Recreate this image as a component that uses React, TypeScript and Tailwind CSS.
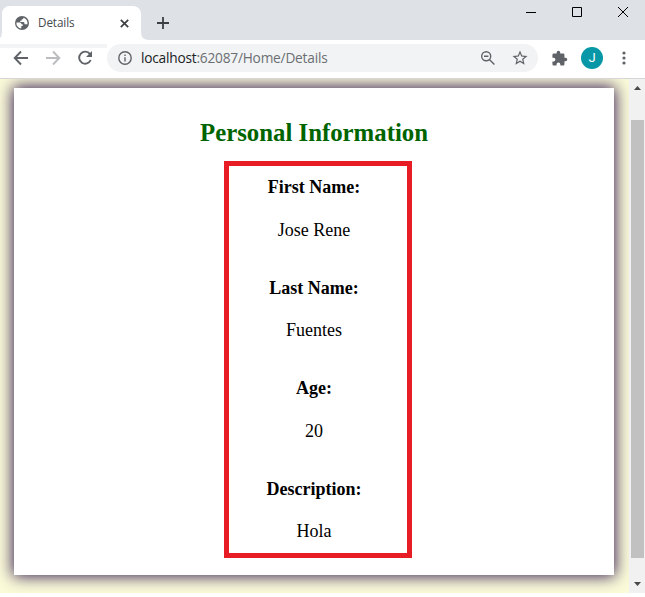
import React from "react";

const fields = [
  { label: "First Name:", value: "Jose Rene" },
  { label: "Last Name:", value: "Fuentes" },
  { label: "Age:", value: "20" },
  { label: "Description:", value: "Hola" },
];

function TabStrip() {
  return (
    <div className="flex h-10 bg-[#dee1e6] pt-[6px]">
      <svg className="-mr-[6px] h-[34px] w-2 shrink-0" viewBox="0 0 8 34">
        <path d="M0 34V32Q2 30 2 26V8Q2 3 8 0V34Z" fill="#fff" />
      </svg>
      <div className="flex h-[34px] w-[139px] shrink-0 items-center rounded-t-lg bg-white">
        <svg className="ml-[13px] h-[14px] w-[14px] shrink-0" viewBox="0 0 14 14">
          <circle cx="7" cy="7" r="7" fill="#5f6368" />
          <path d="M1.4 6.4H4.9Q6.5 6.5 6.5 8.2H7.7V10H6.3V12.5A5.5 5.5 0 0 1 1.4 6.4ZM8.6 1.7Q8.5 3.3 6.6 3.4V4.8H5.2V6H8.5Q9.6 6.2 9.6 8.2H12.4A5.5 5.5 0 0 0 8.6 1.7Z" fill="#fff" />
        </svg>
        <span className="ml-[9px] w-[37px] whitespace-nowrap text-[11.7px] tracking-[-0.1px] text-[#45494d]">Details</span>
        <svg className="ml-[45px] h-[9px] w-[9px]" viewBox="0 0 9 9" fill="none" stroke="#3c4043" strokeWidth="1.7">
          <path d="m.8.8 7.4 7.4M8.2.8.8 8.2" />
        </svg>
      </div>
      <svg className="h-[34px] w-2 shrink-0" viewBox="0 0 8 34">
        <path d="M0 26Q0 34 8 34H0Z" fill="#fff" />
      </svg>
      <svg className="ml-[8px] mt-[11px] h-3 w-3" viewBox="0 0 12 12" stroke="#3c4043" strokeWidth="1.8">
        <path d="M6 0v12M0 6h12" />
      </svg>
      <svg className="ml-auto h-3 w-[103px]" viewBox="0 0 103 12" fill="none" stroke="#000">
        <path d="M0 6.5h10M46.5 1.5h9v9h-9zM92 1l10 10M102 1 92 11" />
      </svg>
      <div className="w-4" />
    </div>
  );
}

function Toolbar() {
  return (
    <div className="flex h-[39px] border-b border-[#d5d6d8] bg-white pt-1">
      <div className="h-7 w-[107px] shrink-0 border-t-4 border-[#f3f4f5]">
        <svg className="h-6 w-[107px]" viewBox="0 48 107 24" fill="none" strokeWidth="1.9">
          <path d="M28 58H15M21 51.5 14.7 58l6.3 6.5" stroke="#5f6368" />
          <path d="M46 58h13M53 51.5l6.3 6.5-6.3 6.5" stroke="#babcbe" />
          <path d="M90 54.1A6 6 0 1 0 90.7 60" stroke="#5f6368" />
          <path d="M92 51v6h-6Z" fill="#5f6368" />
        </svg>
      </div>
      <div className="flex h-7 w-[431px] shrink-0 items-center rounded-full bg-[#f1f3f4] pl-[11px]">
        <svg className="h-[14px] w-[14px]" viewBox="0 0 14 14" fill="none" stroke="#5f6368" strokeWidth="1.4">
          <circle cx="7" cy="7" r="6.2" />
          <path d="M7 6.2v4.2M7 3.5V5" />
        </svg>
        <span className="ml-[9px] w-[188px] whitespace-nowrap text-[13.7px] tracking-[-0.21px] text-[#6b6f73]">
          <span className="text-[#202124]">localhost</span>:62087/Home/Details
        </span>
        <svg className="ml-auto h-[14px] w-[14px]" viewBox="0 0 14 14" fill="none" stroke="#5f6368" strokeWidth="1.4">
          <circle cx="5.2" cy="5.2" r="4.5" />
          <path d="m8.4 8.4 5 5M3 5.2h4.4" />
        </svg>
        <svg className="ml-[16px] mr-[9px] h-[18px] w-[18px]" viewBox="0 0 24 24" fill="#5f6368">
          <path d="m22 9.24-7.19-.62L12 2 9.19 8.63 2 9.24l5.46 4.73L5.82 21 12 17.27 18.18 21l-1.63-7.03L22 9.24ZM12 15.4l-3.76 2.27 1-4.28-3.32-2.88 4.38-.38L12 6.1l1.71 4.04 4.38.38-3.32 2.88 1 4.28L12 15.4Z" />
        </svg>
      </div>
      <div className="flex h-7 flex-1 items-center">
        <svg className="ml-[13px] h-[17px] w-[17px] shrink-0" viewBox="0 0 24 24" fill="#5f6368">
          <path d="M20.5 11H19V7a2 2 0 0 0-2-2h-4V3.5a2.5 2.5 0 0 0-5 0V5H4a2 2 0 0 0-2 2v3.8h1.5a2.7 2.7 0 0 1 0 5.4H2V20a2 2 0 0 0 2 2h3.8v-1.5a2.7 2.7 0 0 1 5.4 0V22H17a2 2 0 0 0 2-2v-4h1.5a2.5 2.5 0 0 0 0-5Z" />
        </svg>
        <div className="ml-[13px] flex h-[22px] w-[22px] shrink-0 items-center justify-center rounded-full bg-[#0797a7] font-['Roboto',sans-serif] text-[13px] text-white">J</div>
        <svg className="ml-[19px] h-[14px] w-[4px]" viewBox="0 0 4 14" fill="#5f6368">
          <circle cx="2" cy="2" r="1.6" />
          <circle cx="2" cy="7" r="1.6" />
          <circle cx="2" cy="12" r="1.6" />
        </svg>
      </div>
    </div>
  );
}

function DetailsPage() {
  return (
    <main className="h-full flex-1 overflow-hidden bg-[#fbfbd9] pl-[14px] pt-[9px] font-['Liberation_Serif',serif] text-black">
      <section className="flex h-[487px] w-[600px] flex-col items-center bg-white shadow-[0_0_15px_1px_#2f1650]">
        <h2 className="mt-[31px] h-[42px] whitespace-nowrap text-[24.8px] font-bold leading-[28px] text-[#006400]">Personal Information</h2>
        <div className="ml-[8px] h-[397px] w-[188px] border-[5px] border-[#e81c24] pr-[8px] pt-[11px] text-center text-[18px] leading-[20px]">
          {fields.map((field) => (
            <dl key={field.label} className="h-[100.6px]">
              <dt className="font-bold">{field.label}</dt>
              <dd className="mt-[22.5px]">{field.value}</dd>
            </dl>
          ))}
        </div>
      </section>
    </main>
  );
}

function Scrollbar() {
  return (
    <div className="flex h-full w-4 flex-col items-center bg-[#f1f1f1]">
      <svg className="mt-[7px] h-1 w-[7px]" viewBox="0 0 7 4"><path d="M3.5 0 7 4H0Z" fill="#484848" /></svg>
      <div className="mt-[30px] h-[438px] w-[13px] bg-[#c1c1c1]" />
      <svg className="mt-[24px] h-1 w-[7px]" viewBox="0 0 7 4"><path d="M0 0h7L3.5 4Z" fill="#484848" /></svg>
    </div>
  );
}

export default function App() {
  return (
    <div className="h-[597px] w-[645px] overflow-hidden bg-white font-['Open_Sans','Noto_Sans',sans-serif]">
      <TabStrip />
      <Toolbar />
      <div className="flex h-[514px]">
        <DetailsPage />
        <Scrollbar />
      </div>
    </div>
  );
}
